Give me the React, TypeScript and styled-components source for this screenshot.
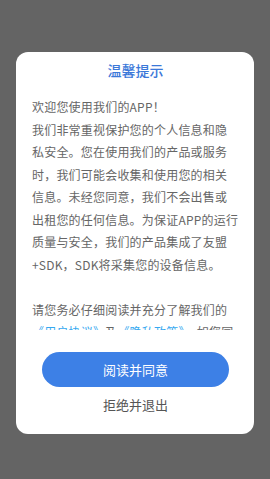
import React from 'react';
import styled, { createGlobalStyle } from 'styled-components';

const GlobalStyle = createGlobalStyle`
    html, body {
        margin: 0;
        padding: 0;
        background: #646464;
    }
    body {
        font-family: "Noto Sans CJK SC", "Noto Sans", sans-serif;
    }
`;

const Overlay = styled.div`
    width: 270px;
    height: 479px;
    background: #646464;
    display: flex;
    flex-direction: column;
    align-items: center;
    padding-top: 52px;
    box-sizing: border-box;
`;

const Dialog = styled.div`
    width: 238px;
    background: #ffffff;
    border-radius: 12px;
    padding: 0 15px 15px 16px;
    box-sizing: border-box;
    display: flex;
    flex-direction: column;
`;

const Title = styled.h2`
    margin: 0;
    height: 36px;
    line-height: 36px;
    text-align: center;
    font-size: 14px;
    font-weight: 500;
    color: #3b78d9;
`;

const Body = styled.div`
    margin-top: 8px;
    height: 234px;
    overflow: hidden;
    font-size: 12px;
    letter-spacing: 0.2px;
    line-height: 22.5px;
    color: #666666;
    white-space: pre-wrap;
`;

const Link = styled.span`
    color: #35a8f0;
`;

const Actions = styled.div`
    display: flex;
    flex-direction: column;
    align-items: center;
    margin-top: 22px;
`;

const AgreeButton = styled.button`
    width: 187px;
    height: 35px;
    border: none;
    border-radius: 18px;
    background: #3d80e6;
    color: #ffffff;
    font-family: inherit;
    font-size: 13px;
    cursor: pointer;
`;

const RejectButton = styled.button`
    margin-top: 4px;
    height: 28px;
    line-height: 28px;
    padding: 0;
    border: none;
    background: transparent;
    color: #555555;
    font-family: inherit;
    font-size: 13px;
    cursor: pointer;
`;

const App = () => {
    return (
        <>
            <GlobalStyle />
            <Overlay>
                <Dialog>
                    <Title>温馨提示</Title>
                    <Body>
                        {'欢迎您使用我们的APP！\n我们非常重视保护您的个人信息和隐私安全。您在使用我们的产品或服务时，我们可能会收集和使用您的相关信息。未经您同意，我们不会出售或出租您的任何信息。为保证APP的运行质量与安全，我们的产品集成了友盟+SDK，SDK将采集您的设备信息。\n\n请您务必仔细阅读并充分了解我们的'}
                        <Link>《用户协议》</Link>及<Link>《隐私政策》</Link>
                        {'，如您同意以上内容，请点击“阅读并同意”开始使用我们的产品和服务。'}
                    </Body>
                    <Actions>
                        <AgreeButton>阅读并同意</AgreeButton>
                        <RejectButton>拒绝并退出</RejectButton>
                    </Actions>
                </Dialog>
            </Overlay>
        </>
    );
};

export default App;
